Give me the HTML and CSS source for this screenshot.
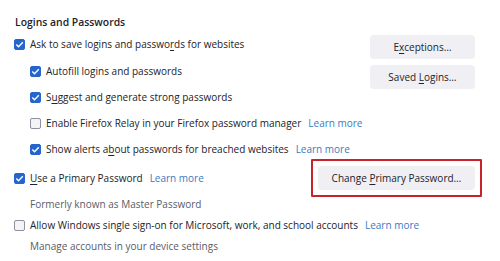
FILE: index.html
```html
<!DOCTYPE html>
<html>
<head>
<meta charset="utf-8">
<link rel="stylesheet" href="styles.css">
</head>
<body>
<div class="page">
  <h2 class="title">Logins and Passwords</h2>
  <div class="top">
    <div class="opts">
      <div class="row">
        <span class="cb on"><svg viewBox="0 0 11 11"><path d="M2.3 5.6 L4.5 7.8 L8.8 3.2" fill="none" stroke="#fff" stroke-width="1.4"/></svg></span>
        <span>Ask to save logins and passwo<u>r</u>ds for websites</span>
      </div>
      <div class="sub">
        <div class="row">
          <span class="cb on"><svg viewBox="0 0 11 11"><path d="M2.3 5.6 L4.5 7.8 L8.8 3.2" fill="none" stroke="#fff" stroke-width="1.4"/></svg></span>
          <span>Autof<u>i</u>ll logins and passwords</span>
        </div>
        <div class="row">
          <span class="cb on"><svg viewBox="0 0 11 11"><path d="M2.3 5.6 L4.5 7.8 L8.8 3.2" fill="none" stroke="#fff" stroke-width="1.4"/></svg></span>
          <span>S<u>u</u>ggest and generate strong passwords</span>
        </div>
        <div class="row">
          <span class="cb"></span>
          <span>Enable Firefox Relay in your Firefox password manager</span>
          <span class="link">Learn more</span>
        </div>
        <div class="row">
          <span class="cb on"><svg viewBox="0 0 11 11"><path d="M2.3 5.6 L4.5 7.8 L8.8 3.2" fill="none" stroke="#fff" stroke-width="1.4"/></svg></span>
          <span>Show alerts a<u>b</u>out passwords for breached websites</span>
          <span class="link">Learn more</span>
        </div>
      </div>
    </div>
    <div class="btns">
      <button class="btn">E<u>x</u>ceptions…</button>
      <button class="btn">Saved <u>L</u>ogins…</button>
    </div>
  </div>
  <div class="row primary">
    <span class="cb on"><svg viewBox="0 0 11 11"><path d="M2.3 5.6 L4.5 7.8 L8.8 3.2" fill="none" stroke="#fff" stroke-width="1.4"/></svg></span>
    <span><u>U</u>se a Primary Password</span>
    <span class="link">Learn more</span>
    <div class="hl">
      <button class="btn wide">Change <u>P</u>rimary Password…</button>
    </div>
  </div>
  <div class="note">Formerly known as Master Password</div>
  <div class="row sso">
    <span class="cb"></span>
    <span>Allow Windows single sign-on for Microsoft, work, and school accounts</span>
    <span class="link">Learn more</span>
  </div>
  <div class="note">Manage accounts in your device settings</div>
</div>
</body>
</html>
```
FILE: styles.css
```css
html, body {
  margin: 0;
  padding: 0;
  background: #ffffff;
}
body {
  width: 500px;
  height: 261px;
  overflow: hidden;
  font-family: "Open Sans", "Noto Sans", sans-serif;
  font-size: 10px;
  color: #232228;
}
.page {
  padding: 14px 25px 0 14px;
}
.title {
  margin: 0 0 0 1px;
  font-size: 10.4px;
  font-weight: 600;
  line-height: 16px;
  height: 16px;
}
.top {
  display: flex;
  justify-content: space-between;
  margin-top: 4px;
}
.row {
  display: flex;
  align-items: center;
  height: 20px;
  white-space: nowrap;
}
.sub {
  padding-left: 16px;
  display: flex;
  flex-direction: column;
  gap: 6px;
  margin-top: 7px;
}
.cb {
  width: 11px;
  height: 11px;
  box-sizing: border-box;
  border: 1px solid #8f8f9d;
  border-radius: 2px;
  background: #f4f4f6;
  margin-right: 5px;
  flex: none;
  display: block;
}
.cb.on {
  background: #2466cc;
  border-color: #2466cc;
}
.cb svg {
  display: block;
  width: 11px;
  height: 11px;
  margin: -1px;
}
u {
  text-decoration-thickness: 1px;
  text-underline-offset: 1.5px;
}
.link {
  color: #3a7bc3;
  margin-left: 7px;
}
.btns {
  display: flex;
  flex-direction: column;
  gap: 6px;
  padding-top: 1px;
}
.btn {
  font-family: inherit;
  font-size: 10px;
  color: #232228;
  background: #f0f0f4;
  border: none;
  border-radius: 4px;
  height: 24px;
  width: 105px;
  padding: 0;
  display: block;
}
.btn.wide {
  width: 157px;
}
.hl {
  margin-left: auto;
  margin-right: -7px;
  border: 2px solid #c8232c;
  border-radius: 1px;
  padding: 5px;
}
.primary {
  height: 24px;
  margin-top: 7px;
}
.note {
  color: #5b5b66;
  padding-left: 16px;
  height: 14px;
  line-height: 14px;
  margin-top: 7px;
}
.sso {
  margin-top: 4px;
}
.sso + .note {
  margin-top: 4px;
}
```
